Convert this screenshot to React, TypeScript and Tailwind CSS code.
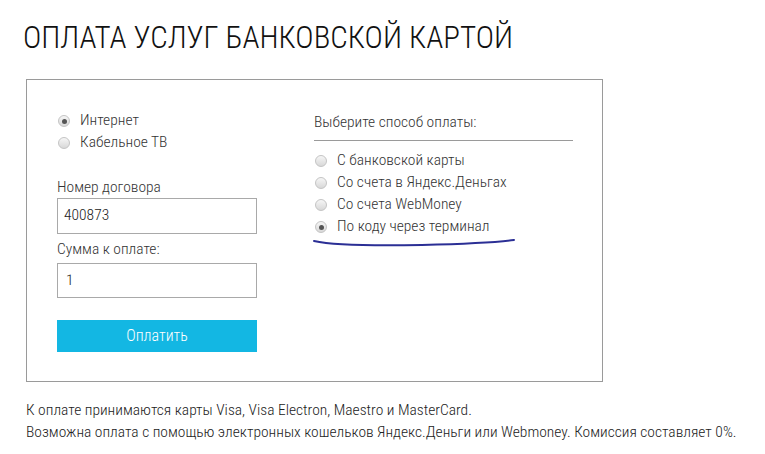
import React from "react";

const font = {
  fontFamily: '"Roboto Condensed", "Liberation Sans Narrow", "DejaVu Sans Condensed", Roboto, sans-serif',
};

const Radio = ({ checked, label }: { checked?: boolean; label: string }) => (
  <label className="flex items-center gap-[10px] h-[22px] text-[15.5px] text-[#333]">
    <span className="w-[12px] h-[12px] rounded-full border border-[#c4c4c4] bg-gradient-to-b from-[#f6f6f6] to-[#d8d8d8] flex items-center justify-center">
      {checked && <span className="w-[5px] h-[5px] rounded-full bg-[#555]" />}
    </span>
    <span>{label}</span>
  </label>
);

export default function App() {
  return (
    <div className="bg-white w-[765px] h-[454px] font-light" style={font}>
      <h1 className="pl-[23px] pt-[16px] text-[31px] leading-[44px] text-[#111] font-light">
        ОПЛАТА УСЛУГ БАНКОВСКОЙ КАРТОЙ
      </h1>
      <div className="ml-[26px] mt-[19px] w-[577px] h-[303px] border border-[#9a9a9a] flex">
        <div className="pl-[30px] pt-[30px] w-[287px]">
          <div className="pl-[1px]">
            <Radio checked label="Интернет" />
            <Radio label="Кабельное ТВ" />
          </div>
          <div className="mt-[24px] text-[15.5px] text-[#333] leading-[18px]">Номер договора</div>
          <div className="mt-[2px] w-[200px] h-[36px] border border-[#a9a9a9] flex items-center px-[6px] text-[15.5px] text-[#222]">
            400873
          </div>
          <div className="mt-[6px] text-[15.5px] text-[#333] leading-[18px]">Сумма к оплате:</div>
          <div className="mt-[5px] w-[200px] h-[35px] border border-[#a9a9a9] flex items-center px-[8px] text-[15.5px] text-[#222]">
            1
          </div>
          <button className="mt-[22px] w-[200px] h-[32px] bg-[#13b7e3] text-white text-[16px] font-light">
            Оплатить
          </button>
        </div>
        <div className="pt-[33px]">
          <div className="text-[15.5px] text-[#333] leading-[18px]">Выберите способ оплаты:</div>
          <div className="mt-[9px] w-[259px] h-px bg-[#9a9a9a]" />
          <div className="mt-[9px] pl-[1px]">
            <Radio label="С банковской карты" />
            <Radio label="Со счета в Яндекс.Деньгах" />
            <Radio label="Со счета WebMoney" />
            <Radio checked label="По коду через терминал" />
          </div>
          <svg width="210" height="12" viewBox="0 0 210 12" className="-mt-[1px] -ml-[2px]">
            <path
              d="M2 4 C 20 8, 60 9, 110 8 C 150 7, 180 6, 202 3"
              stroke="#2b2f95"
              strokeWidth="2"
              fill="none"
              strokeLinecap="round"
            />
          </svg>
        </div>
      </div>
      <div className="ml-[26px] mt-[17px] text-[15.5px] leading-[22px] text-[#222]">
        <p>К оплате принимаются карты Visa, Visa Electron, Maestro и MasterCard.</p>
        <p>Возможна оплата с помощью электронных кошельков Яндекс.Деньги или Webmoney. Комиссия составляет 0%.</p>
      </div>
    </div>
  );
}
